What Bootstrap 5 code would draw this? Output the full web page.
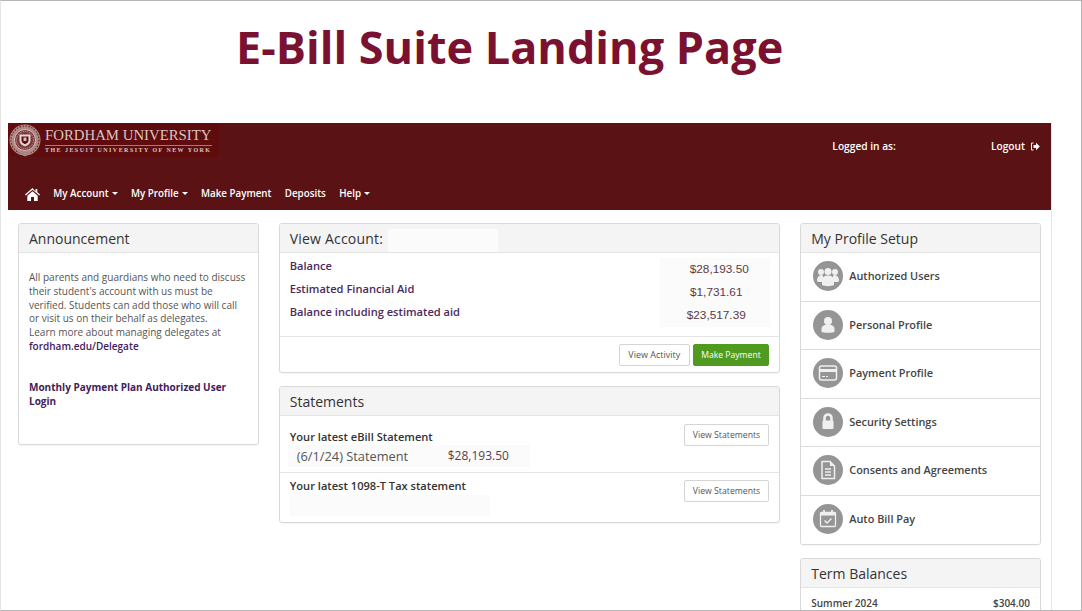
<!doctype html>
<html lang="en">
<head>
<meta charset="utf-8">
<title>E-Bill Suite Landing Page</title>
<link href="https://cdn.jsdelivr.net/npm/bootstrap@5.3.0/dist/css/bootstrap.min.css" rel="stylesheet">
<style>
html,body{height:100%;overflow:hidden}
body{font-family:"Open Sans","Noto Sans",sans-serif;font-size:10px;color:#555;background:#fff}
.slide-frame{height:611px;overflow:hidden;border:1px solid #b5b5b5;border-left-color:#e4e4e4}
.slide-title{font-family:"Open Sans",sans-serif;font-weight:700;font-size:45px;line-height:62px;color:#7b1130;margin:15px 0 45px 235px;text-align:left}
.app-page{width:1044px;margin-left:7px;border-right:1px solid #e6e6e6;min-height:500px}
.brand-bar{background:#5a1214;height:87px;color:#fff}
.logo-box{width:211px;height:34px;background:#5f0c0e;color:#d8c6c2}
.seal-svg{flex:none;margin-right:3px}
.logo-name{font-family:"Liberation Serif",serif;font-size:14.8px;line-height:17px;white-space:nowrap}
.logo-tag{font-family:"Liberation Serif",serif;font-size:6px;line-height:8px;letter-spacing:1.45px;border-top:1px solid #a47b77;white-space:nowrap;font-weight:700;margin-top:1px}
.user-links{font-size:10.2px;font-weight:600;padding:16px 11px 0 0}
.user-gap{margin-right:95px}
.logout-ic{margin-left:5px}
.nav-strip{padding:0 0 0 17px;margin-top:26px;gap:13.3px}
.nav-strip .nav-link{color:#fff;font-size:9.8px;font-weight:600;padding:0;line-height:22px}
.nav-strip .dropdown-toggle::after{border-top-width:3px;border-left-width:3px;border-right-width:3px;margin-left:3px;vertical-align:2px}
.panel-grid{--bs-gutter-x:20px;margin:13px 0 0}
.panel{--bs-card-border-color:#d9d9d9;--bs-card-border-radius:3px;--bs-card-inner-border-radius:2px;--bs-card-cap-bg:#f4f4f4;--bs-card-cap-padding-x:10px;--bs-card-cap-padding-y:0;margin-bottom:13px;box-shadow:0 1px 1px rgba(0,0,0,.04)}
.panel .card-header{font-size:14px;line-height:27px;padding-top:1px;color:#333;border-bottom-color:#e4e4e4}
.ann-body{height:191px;padding:18px 10px 0;line-height:13.8px}
.ann-body a{color:#44205a;font-weight:600;text-decoration:none}
.ann-body a.fw-bold{font-weight:700!important}
.ann-gap{margin-top:27px}
.acct-body{padding:5px 10px 0;height:83px}
.acct-head{letter-spacing:.2px}
.acct-row{height:23px;color:#4a2a5c;font-size:11.1px;font-weight:600;line-height:16px}
.acct-amt{width:110px;margin-right:-1px;padding-left:2px;font-family:"Liberation Sans",sans-serif;font-size:11.8px;font-weight:400;color:#5e3a44;background:#fbfbfb;text-align:center;height:23px;line-height:23px}
.acct-row .amt-first{padding-left:8px}
.mask{background:#fbfbfb}
.head-mask{display:inline-block;width:110px;height:23px;vertical-align:middle;margin-left:1px}
.act-foot{padding:7px 10px 6px;border-top:1px solid #e4e4e4;gap:3px}
.ghost-btn{font-size:8.7px;padding:0 8px;line-height:20px;color:#555;background:#fff;border:1px solid #d5d5d5;border-radius:2px}
.activity-btn{font-size:9px;padding:0 8.500px}
.pay-btn{font-size:8.6px;padding:0 7.5px;line-height:20px;color:#fff;background:#4f9a1f;border:1px solid #4f9a1f;border-radius:2px}
.stmt-row{padding:8px 10px 0;color:#333;font-size:11.1px;font-weight:600;line-height:15px}
.stmt-one{height:57px;border-bottom:1px solid #e4e4e4}
.stmt-two{height:49px;padding-top:7px}
.stmt-one-text{padding-top:5px}
.stmt-two-text{margin-top:-2px}
.stmt-detail{font-size:12.8px;font-weight:400;color:#5b4048;background:#fbfbfb;width:242px;height:22px;line-height:22px;padding-left:9px;margin:1px 0 0 -2px;display:flex}
.stmt-detail span:first-child{width:151px;color:#555}
.stmt-detail span:last-child{font-size:12px}
.tax-mask{width:200px;height:21px;margin-top:2px}
.profile-list{--bs-list-group-border-color:#dcdcdc;--bs-list-group-border-radius:0}
.profile-list .list-group-item{height:48.5px;padding:0 0 1px 12px;color:#444;font-size:10.9px;font-weight:600}
.circle-ic{width:30px;height:30px;flex:none;margin-right:6px}
.term-row{padding:8px 10px;color:#444;font-size:10px;font-weight:600;line-height:14px}
</style>
</head>
<body>
<div class="slide-frame">
  <h1 class="slide-title">E-Bill Suite Landing Page</h1>
  <div class="app-page">
    <header class="brand-bar">
      <div class="d-flex justify-content-between">
        <div class="logo-box d-flex align-items-center">
          <svg class="seal-svg" width="34" height="34" viewBox="0 0 34 34">
            <circle cx="17" cy="17" r="15.500" fill="#b08a87"/>
            <circle cx="17" cy="17" r="14" fill="none" stroke="#6a2428" stroke-width="1.200" stroke-dasharray="1.500 1.500"/>
            <circle cx="17" cy="17" r="10.500" fill="#7a3a3c" stroke="#d5bcb8" stroke-width="1"/>
            <circle cx="17" cy="17" r="8.500" fill="none" stroke="#caa9a5" stroke-width="1" stroke-dasharray="1 1"/>
            <path d="M11.500 11.500h11v6c0 3-2.700 5-5.500 6-2.800-1-5.500-3-5.500-6z" fill="#e6d6d2"/>
            <path d="M13.500 13.500h7v4c0 1.800-1.700 3-3.500 3.700-1.800-.7-3.500-1.900-3.500-3.700z" fill="#5f0c0e"/>
            <path d="M15.500 14.500h3v3.500h-3z" fill="#d5bcb8"/>
            <path d="M10 30l7 3.500 7-3.500-3-1.500h-8z" fill="#a98480"/>
          </svg>
          <div>
            <div class="logo-name">FORDHAM UNIVERSITY</div>
            <div class="logo-tag">THE JESUIT UNIVERSITY OF NEW YORK</div>
          </div>
        </div>
        <div class="user-links d-flex align-items-center align-self-start">
          <span class="user-gap">Logged in as:</span>
          <span>Logout</span>
          <svg width="10" height="9" viewBox="0 0 10 9" class="logout-ic"><path d="M3.500 1H1.500v7h2" fill="none" stroke="#fff" stroke-width="1"/><path d="M3.500 3h2.500V.8L9.800 4.500 6 8.200V6H3.500z" fill="#fff"/></svg>
        </div>
      </div>
      <nav class="nav nav-strip align-items-center">
        <a class="nav-link" href="#" aria-label="Home"><svg width="15" height="13" viewBox="0 0 15 13" class="d-block"><path d="M7.500 0 0 6.500l.8 1L7.500 1.800l6.700 5.700.8-1-2.700-2.300V1h-1.800v2.400z" fill="#fff"/><path d="M2.300 7.800 7.500 3.300l5.200 4.500V13H9V9H6v4H2.300z" fill="#fff"/></svg></a>
        <a class="nav-link dropdown-toggle" href="#">My Account</a>
        <a class="nav-link dropdown-toggle" href="#">My Profile</a>
        <a class="nav-link" href="#">Make Payment</a>
        <a class="nav-link" href="#">Deposits</a>
        <a class="nav-link dropdown-toggle" href="#">Help</a>
      </nav>
    </header>

    <div class="row panel-grid">
      <div class="col-3">
        <section class="card panel">
          <div class="card-header">Announcement</div>
          <div class="ann-body">
            All parents and guardians who need to discuss their student's account with us must be verified. Students can add those who will call or visit us on their behalf as delegates.<br>
            Learn more about managing delegates at <a href="#">fordham.edu/Delegate</a>
            <div class="ann-gap"><a href="#" class="fw-bold">Monthly Payment Plan Authorized User Login</a></div>
          </div>
        </section>
      </div>
      <div class="col-6">
        <section class="card panel">
          <div class="card-header"><span class="acct-head">View Account:</span> <span class="head-mask mask"></span></div>
          <div class="acct-body">
            <div class="acct-row d-flex justify-content-between"><span>Balance</span><span class="acct-amt amt-first">$28,193.50</span></div>
            <div class="acct-row d-flex justify-content-between"><span>Estimated Financial Aid</span><span class="acct-amt">$1,731.61</span></div>
            <div class="acct-row d-flex justify-content-between"><span>Balance including estimated aid</span><span class="acct-amt">$23,517.39</span></div>
          </div>
          <div class="act-foot d-flex justify-content-end">
            <a class="btn ghost-btn activity-btn" href="#">View Activity</a>
            <a class="btn pay-btn" href="#">Make Payment</a>
          </div>
        </section>
        <section class="card panel">
          <div class="card-header">Statements</div>
          <div class="stmt-row stmt-one d-flex justify-content-between">
            <div class="stmt-one-text">Your latest eBill Statement
              <div class="stmt-detail"><span>(6/1/24) Statement</span><span>$28,193.50</span></div>
            </div>
            <a class="btn ghost-btn align-self-start" href="#">View Statements</a>
          </div>
          <div class="stmt-row stmt-two d-flex justify-content-between">
            <div class="stmt-two-text">Your latest 1098-T Tax statement
              <div class="tax-mask mask"></div>
            </div>
            <a class="btn ghost-btn align-self-start" href="#">View Statements</a>
          </div>
        </section>
      </div>
      <div class="col-3">
        <section class="card panel">
          <div class="card-header">My Profile Setup</div>
          <div class="list-group list-group-flush profile-list">
            <a class="list-group-item d-flex align-items-center" href="#">
              <svg class="circle-ic" viewBox="0 0 30 30"><circle cx="15" cy="15" r="15" fill="#959595"/><g fill="#f0f0f0"><circle cx="8" cy="11" r="3"/><circle cx="22" cy="11" r="3"/><circle cx="15" cy="10.500" r="3.500"/><path d="M4 20c0-4 2-6 5-6l1 1v6H5z"/><path d="M26 20c0-4-2-6-5-6l-1 1v6h5z"/><path d="M9 24v-5c0-3 2.500-4.500 6-4.500s6 1.500 6 4.500v5c-3 1.500-9 1.500-12 0z"/></g></svg>
              Authorized Users</a>
            <a class="list-group-item d-flex align-items-center" href="#">
              <svg class="circle-ic" viewBox="0 0 30 30"><circle cx="15" cy="15" r="15" fill="#959595"/><g fill="#f0f0f0"><circle cx="15" cy="11" r="4"/><path d="M8.500 22v-3c0-3 2.500-4.500 6.500-4.500s6.500 1.500 6.500 4.500v3c-2 1-11 1-13 0z"/></g></svg>
              Personal Profile</a>
            <a class="list-group-item d-flex align-items-center" href="#">
              <svg class="circle-ic" viewBox="0 0 30 30"><circle cx="15" cy="15" r="15" fill="#959595"/><rect x="6.500" y="8" width="17" height="14" rx="2" fill="none" stroke="#f0f0f0" stroke-width="1.500"/><rect x="7" y="11" width="16" height="3" fill="#f0f0f0"/><path d="M9 18.500h3M13 18.500h2" stroke="#f0f0f0" stroke-width="1.200"/></svg>
              Payment Profile</a>
            <a class="list-group-item d-flex align-items-center" href="#">
              <svg class="circle-ic" viewBox="0 0 30 30"><circle cx="15" cy="15" r="15" fill="#959595"/><path d="M11.500 14v-3a3.500 3.500 0 0 1 7 0v3" fill="none" stroke="#f0f0f0" stroke-width="2.600"/><rect x="9.500" y="13.500" width="11" height="8.500" rx="1" fill="#f0f0f0"/></svg>
              Security Settings</a>
            <a class="list-group-item d-flex align-items-center" href="#">
              <svg class="circle-ic" viewBox="0 0 30 30"><circle cx="15" cy="15" r="15" fill="#959595"/><path d="M9 6.500h8l4.500 4.500v12.500H9z" fill="none" stroke="#f0f0f0" stroke-width="1.500"/><path d="M17 6.500v4.500h4.500z" fill="#f0f0f0"/><path d="M12 14h6M12 17h6M12 20h6" stroke="#f0f0f0" stroke-width="1.300"/></svg>
              Consents and Agreements</a>
            <a class="list-group-item d-flex align-items-center" href="#">
              <svg class="circle-ic" viewBox="0 0 30 30"><circle cx="15" cy="15" r="15" fill="#959595"/><rect x="7.500" y="8.500" width="15" height="14" rx="1" fill="none" stroke="#f0f0f0" stroke-width="1.300"/><path d="M7.500 8.500h15v3h-15z" fill="#f0f0f0"/><path d="M11 6v4M19 6v4" stroke="#f0f0f0" stroke-width="1.800"/><path d="m11.500 16.500 2.500 2.500 4.500-4.500" fill="none" stroke="#f0f0f0" stroke-width="1.400"/></svg>
              Auto Bill Pay</a>
          </div>
        </section>
        <section class="card panel">
          <div class="card-header">Term Balances</div>
          <div class="term-row d-flex justify-content-between"><span>Summer 2024</span><span>$304.00</span></div>
        </section>
      </div>
    </div>
  </div>
</div>
<script src="https://cdn.jsdelivr.net/npm/bootstrap@5.3.0/dist/js/bootstrap.bundle.min.js"></script>
</body>
</html>
